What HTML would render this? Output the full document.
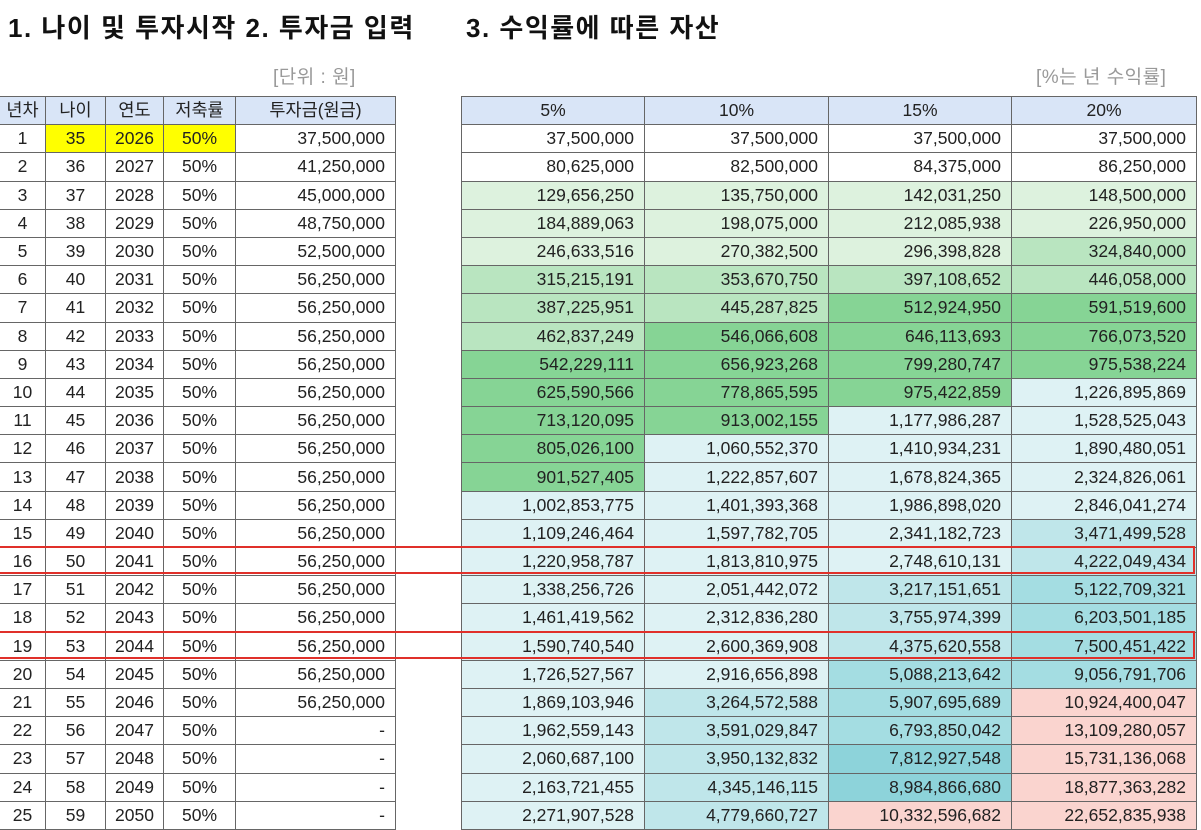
<!DOCTYPE html>
<html><head><meta charset="utf-8"><style>
body{margin:0;width:1201px;height:829px;overflow:hidden;background:#fff;font-family:"Liberation Sans","Noto Sans CJK KR",sans-serif;color:#222;position:relative}
.t{position:absolute;top:8px;font-size:26px;font-weight:bold;color:#111;letter-spacing:1.5px}
.u{position:absolute;top:62px;font-size:19px;color:#999;letter-spacing:0.5px}
table{position:absolute;top:96px;border-collapse:collapse;font-size:17.5px;table-layout:fixed}
td{border:1px solid #666;height:27.2px;padding:0;line-height:27px;white-space:nowrap}
#L td{text-align:center}
#L td.r,#R td{text-align:right;padding-right:10px}
tr.h td{background:#d9e5f7;text-align:center!important;padding-right:0!important}
.y{background:#ffff00}
.g1{background:#ddf2de}.g2{background:#b9e5c0}.g3{background:#86d495}
.t0{background:#def2f4}.t1{background:#bfe6ea}.t2{background:#a4dde2}.t3{background:#8dd3da}.p{background:#fad4cf}
.box{position:absolute;left:-2px;width:1197px;height:28px;border:2px solid #e0302a;box-sizing:border-box}
</style></head><body>
<div class="t" style="left:8px">1. 나이 및 투자시작 2. 투자금 입력</div>
<div class="t" style="left:466px">3. 수익률에 따른 자산</div>
<div class="u" style="left:273px">[단위 : 원]</div>
<div class="u" style="left:1036px">[%는 년 수익률]</div>
<table id="L" style="left:-1px;width:396px">
<colgroup><col style="width:46px"><col style="width:60px"><col style="width:58px"><col style="width:72px"><col style="width:160px"></colgroup>
<tr class="h"><td>년차</td><td>나이</td><td>연도</td><td>저축률</td><td>투자금(원금)</td></tr>
<tr><td>1</td><td class="y">35</td><td class="y">2026</td><td class="y">50%</td><td class="r">37,500,000</td></tr>
<tr><td>2</td><td>36</td><td>2027</td><td>50%</td><td class="r">41,250,000</td></tr>
<tr><td>3</td><td>37</td><td>2028</td><td>50%</td><td class="r">45,000,000</td></tr>
<tr><td>4</td><td>38</td><td>2029</td><td>50%</td><td class="r">48,750,000</td></tr>
<tr><td>5</td><td>39</td><td>2030</td><td>50%</td><td class="r">52,500,000</td></tr>
<tr><td>6</td><td>40</td><td>2031</td><td>50%</td><td class="r">56,250,000</td></tr>
<tr><td>7</td><td>41</td><td>2032</td><td>50%</td><td class="r">56,250,000</td></tr>
<tr><td>8</td><td>42</td><td>2033</td><td>50%</td><td class="r">56,250,000</td></tr>
<tr><td>9</td><td>43</td><td>2034</td><td>50%</td><td class="r">56,250,000</td></tr>
<tr><td>10</td><td>44</td><td>2035</td><td>50%</td><td class="r">56,250,000</td></tr>
<tr><td>11</td><td>45</td><td>2036</td><td>50%</td><td class="r">56,250,000</td></tr>
<tr><td>12</td><td>46</td><td>2037</td><td>50%</td><td class="r">56,250,000</td></tr>
<tr><td>13</td><td>47</td><td>2038</td><td>50%</td><td class="r">56,250,000</td></tr>
<tr><td>14</td><td>48</td><td>2039</td><td>50%</td><td class="r">56,250,000</td></tr>
<tr><td>15</td><td>49</td><td>2040</td><td>50%</td><td class="r">56,250,000</td></tr>
<tr><td>16</td><td>50</td><td>2041</td><td>50%</td><td class="r">56,250,000</td></tr>
<tr><td>17</td><td>51</td><td>2042</td><td>50%</td><td class="r">56,250,000</td></tr>
<tr><td>18</td><td>52</td><td>2043</td><td>50%</td><td class="r">56,250,000</td></tr>
<tr><td>19</td><td>53</td><td>2044</td><td>50%</td><td class="r">56,250,000</td></tr>
<tr><td>20</td><td>54</td><td>2045</td><td>50%</td><td class="r">56,250,000</td></tr>
<tr><td>21</td><td>55</td><td>2046</td><td>50%</td><td class="r">56,250,000</td></tr>
<tr><td>22</td><td>56</td><td>2047</td><td>50%</td><td class="r">-</td></tr>
<tr><td>23</td><td>57</td><td>2048</td><td>50%</td><td class="r">-</td></tr>
<tr><td>24</td><td>58</td><td>2049</td><td>50%</td><td class="r">-</td></tr>
<tr><td>25</td><td>59</td><td>2050</td><td>50%</td><td class="r">-</td></tr>
</table>
<table id="R" style="left:461px;width:735px">
<colgroup><col style="width:183px"><col style="width:184px"><col style="width:183px"><col style="width:185px"></colgroup>
<tr class="h"><td>5%</td><td>10%</td><td>15%</td><td>20%</td></tr>
<tr><td>37,500,000</td><td>37,500,000</td><td>37,500,000</td><td>37,500,000</td></tr>
<tr><td>80,625,000</td><td>82,500,000</td><td>84,375,000</td><td>86,250,000</td></tr>
<tr><td class="g1">129,656,250</td><td class="g1">135,750,000</td><td class="g1">142,031,250</td><td class="g1">148,500,000</td></tr>
<tr><td class="g1">184,889,063</td><td class="g1">198,075,000</td><td class="g1">212,085,938</td><td class="g1">226,950,000</td></tr>
<tr><td class="g1">246,633,516</td><td class="g1">270,382,500</td><td class="g1">296,398,828</td><td class="g2">324,840,000</td></tr>
<tr><td class="g2">315,215,191</td><td class="g2">353,670,750</td><td class="g2">397,108,652</td><td class="g2">446,058,000</td></tr>
<tr><td class="g2">387,225,951</td><td class="g2">445,287,825</td><td class="g3">512,924,950</td><td class="g3">591,519,600</td></tr>
<tr><td class="g2">462,837,249</td><td class="g3">546,066,608</td><td class="g3">646,113,693</td><td class="g3">766,073,520</td></tr>
<tr><td class="g3">542,229,111</td><td class="g3">656,923,268</td><td class="g3">799,280,747</td><td class="g3">975,538,224</td></tr>
<tr><td class="g3">625,590,566</td><td class="g3">778,865,595</td><td class="g3">975,422,859</td><td class="t0">1,226,895,869</td></tr>
<tr><td class="g3">713,120,095</td><td class="g3">913,002,155</td><td class="t0">1,177,986,287</td><td class="t0">1,528,525,043</td></tr>
<tr><td class="g3">805,026,100</td><td class="t0">1,060,552,370</td><td class="t0">1,410,934,231</td><td class="t0">1,890,480,051</td></tr>
<tr><td class="g3">901,527,405</td><td class="t0">1,222,857,607</td><td class="t0">1,678,824,365</td><td class="t0">2,324,826,061</td></tr>
<tr><td class="t0">1,002,853,775</td><td class="t0">1,401,393,368</td><td class="t0">1,986,898,020</td><td class="t0">2,846,041,274</td></tr>
<tr><td class="t0">1,109,246,464</td><td class="t0">1,597,782,705</td><td class="t0">2,341,182,723</td><td class="t1">3,471,499,528</td></tr>
<tr><td class="t0">1,220,958,787</td><td class="t0">1,813,810,975</td><td class="t0">2,748,610,131</td><td class="t1">4,222,049,434</td></tr>
<tr><td class="t0">1,338,256,726</td><td class="t0">2,051,442,072</td><td class="t1">3,217,151,651</td><td class="t2">5,122,709,321</td></tr>
<tr><td class="t0">1,461,419,562</td><td class="t0">2,312,836,280</td><td class="t1">3,755,974,399</td><td class="t2">6,203,501,185</td></tr>
<tr><td class="t0">1,590,740,540</td><td class="t0">2,600,369,908</td><td class="t1">4,375,620,558</td><td class="t2">7,500,451,422</td></tr>
<tr><td class="t0">1,726,527,567</td><td class="t0">2,916,656,898</td><td class="t2">5,088,213,642</td><td class="t2">9,056,791,706</td></tr>
<tr><td class="t0">1,869,103,946</td><td class="t1">3,264,572,588</td><td class="t2">5,907,695,689</td><td class="p">10,924,400,047</td></tr>
<tr><td class="t0">1,962,559,143</td><td class="t1">3,591,029,847</td><td class="t2">6,793,850,042</td><td class="p">13,109,280,057</td></tr>
<tr><td class="t0">2,060,687,100</td><td class="t1">3,950,132,832</td><td class="t3">7,812,927,548</td><td class="p">15,731,136,068</td></tr>
<tr><td class="t0">2,163,721,455</td><td class="t1">4,345,146,115</td><td class="t3">8,984,866,680</td><td class="p">18,877,363,282</td></tr>
<tr><td class="t0">2,271,907,528</td><td class="t1">4,779,660,727</td><td class="p">10,332,596,682</td><td class="p">22,652,835,938</td></tr>
</table>
<div class="box" style="top:546px"></div>
<div class="box" style="top:631px"></div>
</body></html>
